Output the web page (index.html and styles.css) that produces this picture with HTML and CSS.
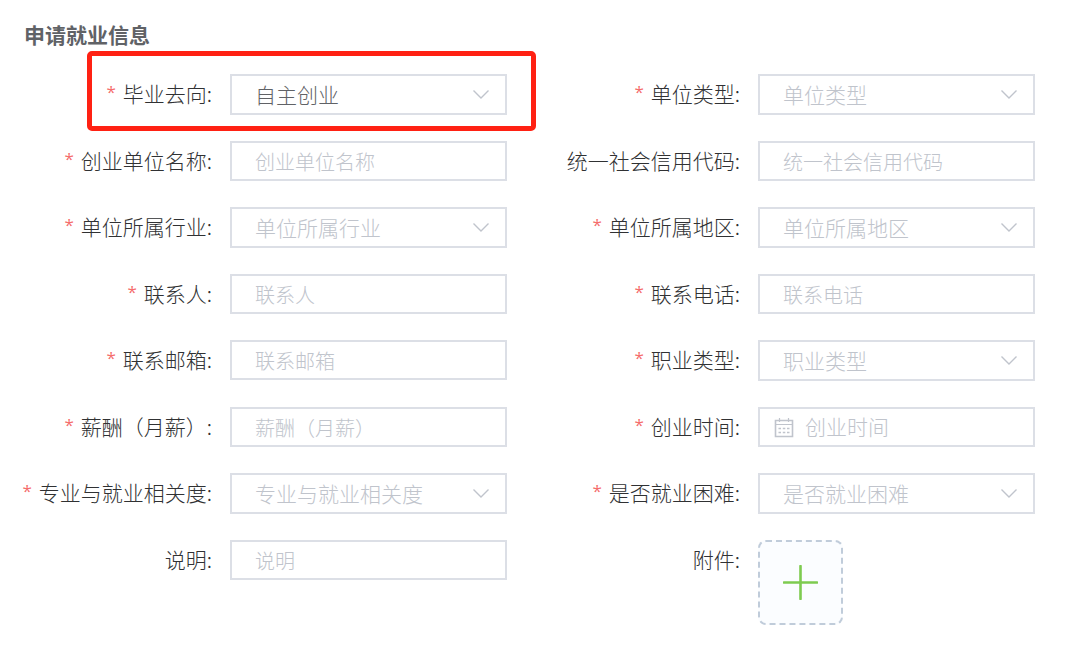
FILE: index.html
```html
<!DOCTYPE html>
<html lang="zh-CN">
<head>
    <meta charset="UTF-8">
    <meta name="viewport" content="width=device-width, initial-scale=1.0">
    <title>申请就业信息</title>
    <link rel="stylesheet" href="styles.css">
</head>
<body>

    <svg class="sprite" width="0" height="0" aria-hidden="true">
        <symbol id="icon-arrow" viewBox="0 0 18 12">
            <path d="M1.5 1.5 L9 9 L16.5 1.5" fill="none" stroke="currentColor" stroke-width="1.4"/>
        </symbol>
    </svg>

    <h2 class="form-title">申请就业信息</h2>
    <form class="job-form">
        <div class="form-item highlight">
            <label class="required" for="direction">毕业去向:</label>
            <div class="control">
                <select id="direction" class="selected">
                    <option>自主创业</option>
                </select>
                <svg class="arrow"><use href="#icon-arrow"/></svg>
            </div>
        </div>
        <div class="form-item">
            <label class="required" for="unitType">单位类型:</label>
            <div class="control">
                <select id="unitType">
                    <option>单位类型</option>
                </select>
                <svg class="arrow"><use href="#icon-arrow"/></svg>
            </div>
        </div>

        <div class="form-item">
            <label class="required" for="unitName">创业单位名称:</label>
            <div class="control">
                <input type="text" id="unitName" placeholder="创业单位名称">
            </div>
        </div>
        <div class="form-item">
            <label for="creditCode">统一社会信用代码:</label>
            <div class="control">
                <input type="text" id="creditCode" placeholder="统一社会信用代码">
            </div>
        </div>

        <div class="form-item">
            <label class="required" for="industry">单位所属行业:</label>
            <div class="control">
                <select id="industry">
                    <option>单位所属行业</option>
                </select>
                <svg class="arrow"><use href="#icon-arrow"/></svg>
            </div>
        </div>
        <div class="form-item">
            <label class="required" for="area">单位所属地区:</label>
            <div class="control">
                <select id="area">
                    <option>单位所属地区</option>
                </select>
                <svg class="arrow"><use href="#icon-arrow"/></svg>
            </div>
        </div>

        <div class="form-item">
            <label class="required" for="contact">联系人:</label>
            <div class="control">
                <input type="text" id="contact" placeholder="联系人">
            </div>
        </div>
        <div class="form-item">
            <label class="required" for="phone">联系电话:</label>
            <div class="control">
                <input type="text" id="phone" placeholder="联系电话">
            </div>
        </div>

        <div class="form-item">
            <label class="required" for="email">联系邮箱:</label>
            <div class="control">
                <input type="text" id="email" placeholder="联系邮箱">
            </div>
        </div>
        <div class="form-item">
            <label class="required" for="jobType">职业类型:</label>
            <div class="control">
                <select id="jobType">
                    <option>职业类型</option>
                </select>
                <svg class="arrow"><use href="#icon-arrow"/></svg>
            </div>
        </div>

        <div class="form-item">
            <label class="required" for="salary">薪酬（月薪）:</label>
            <div class="control">
                <input type="text" id="salary" placeholder="薪酬（月薪）">
            </div>
        </div>
        <div class="form-item">
            <label class="required" for="startTime">创业时间:</label>
            <div class="control">
                <input type="text" id="startTime" class="date-input" placeholder="创业时间">
                <svg class="calendar" viewBox="0 0 20 20" fill="none" stroke="currentColor">
                    <path d="M1.5 2.5H18.5V18.5H1.5Z" stroke-width="1.6"/>
                    <path d="M1 6.5H19M5.5 0V4M14.5 0V4" stroke-width="1.2"/>
                    <path d="M4.5 10.5H7M8.8 10.5H11.3M13 10.5H15.5M4.5 14.5H7M8.8 14.5H11.3M13 14.5H15.5" stroke-width="1.5"/>
                </svg>
            </div>
        </div>

        <div class="form-item">
            <label class="required" for="relevance">专业与就业相关度:</label>
            <div class="control">
                <select id="relevance">
                    <option>专业与就业相关度</option>
                </select>
                <svg class="arrow"><use href="#icon-arrow"/></svg>
            </div>
        </div>
        <div class="form-item">
            <label class="required" for="difficulty">是否就业困难:</label>
            <div class="control">
                <select id="difficulty">
                    <option>是否就业困难</option>
                </select>
                <svg class="arrow"><use href="#icon-arrow"/></svg>
            </div>
        </div>

        <div class="form-item">
            <label for="remark">说明:</label>
            <div class="control">
                <input type="text" id="remark" placeholder="说明">
            </div>
        </div>
        <div class="form-item">
            <label for="upload">附件:</label>
            <div class="control">
                <button type="button" id="upload" class="upload-button">
                    <svg width="35" height="35" viewBox="0 0 35 35">
                        <path d="M17.5 1V34M1 17.5H34" fill="none" stroke="#7ecb50" stroke-width="2.6" stroke-linecap="round"/>
                    </svg>
                </button>
            </div>
        </div>
    </form>

</body>
</html>
```

FILE: styles.css
```css
* {
    box-sizing: border-box;
}
body {
    font-family: "Noto Sans CJK SC", sans-serif;
    font-size: 21px;
    font-weight: 300;
    margin: 0;
    padding: 19px 34px 34px 6px;
    background-color: #fff;
    color: #303133;
}
.sprite {
    position: absolute;
}
.form-title {
    margin: 0 0 25px;
    padding-left: 18px;
    font-size: 21px;
    line-height: 30px;
    color: #606266;
}
.job-form {
    display: grid;
    grid-template-columns: 1fr 1fr;
    gap: 26px 27px;
    align-items: start;
}
.form-item {
    display: flex;
    position: relative;
}
.form-item label {
    width: 224px;
    flex-shrink: 0;
    padding-right: 18px;
    line-height: 38px;
    text-align: right;
    white-space: nowrap;
}
.required::before {
    content: "*";
    margin-right: 7px;
    font-family: "Open Sans", sans-serif;
    font-size: 17px;
    font-weight: 400;
    line-height: 1;
    vertical-align: 4px;
    color: #f56c6c;
}
.highlight::after {
    content: "";
    position: absolute;
    top: -23px;
    right: -29px;
    bottom: -16px;
    left: 81px;
    border: 5px solid #ff2113;
    border-radius: 5px;
    pointer-events: none;
}
.control {
    flex: 1;
    min-width: 0;
    display: flex;
    position: relative;
}
input,
select {
    width: 100%;
    height: 40px;
    margin: 0;
    padding: 0 23px;
    border: 2px solid #dcdfe6;
    border-radius: 0;
    background-color: #fff;
    font-family: inherit;
    font-size: 20px;
    font-weight: inherit;
    color: #606266;
    outline: none;
}
select {
    height: 41px;
    padding-bottom: 2px;
    font-size: 21px;
    color: #c0c4cc;
    appearance: none;
}
.selected {
    color: #606266;
}
input::placeholder {
    color: #c0c4cc;
    opacity: 1;
}
.date-input {
    padding: 0 23px 2px 45px;
    font-size: 21px;
}
.arrow {
    position: absolute;
    top: 15px;
    right: 17px;
    width: 18px;
    height: 12px;
    color: #c0c4cc;
    pointer-events: none;
}
.calendar {
    position: absolute;
    top: 11px;
    left: 16px;
    width: 20px;
    height: 20px;
    color: #c0c4cc;
}
.upload-button {
    display: flex;
    align-items: center;
    justify-content: center;
    width: 85px;
    height: 85px;
    padding: 0;
    border: 2px dashed #c0ccda;
    border-radius: 8px;
    background-color: #fbfdff;
    cursor: pointer;
}
```
